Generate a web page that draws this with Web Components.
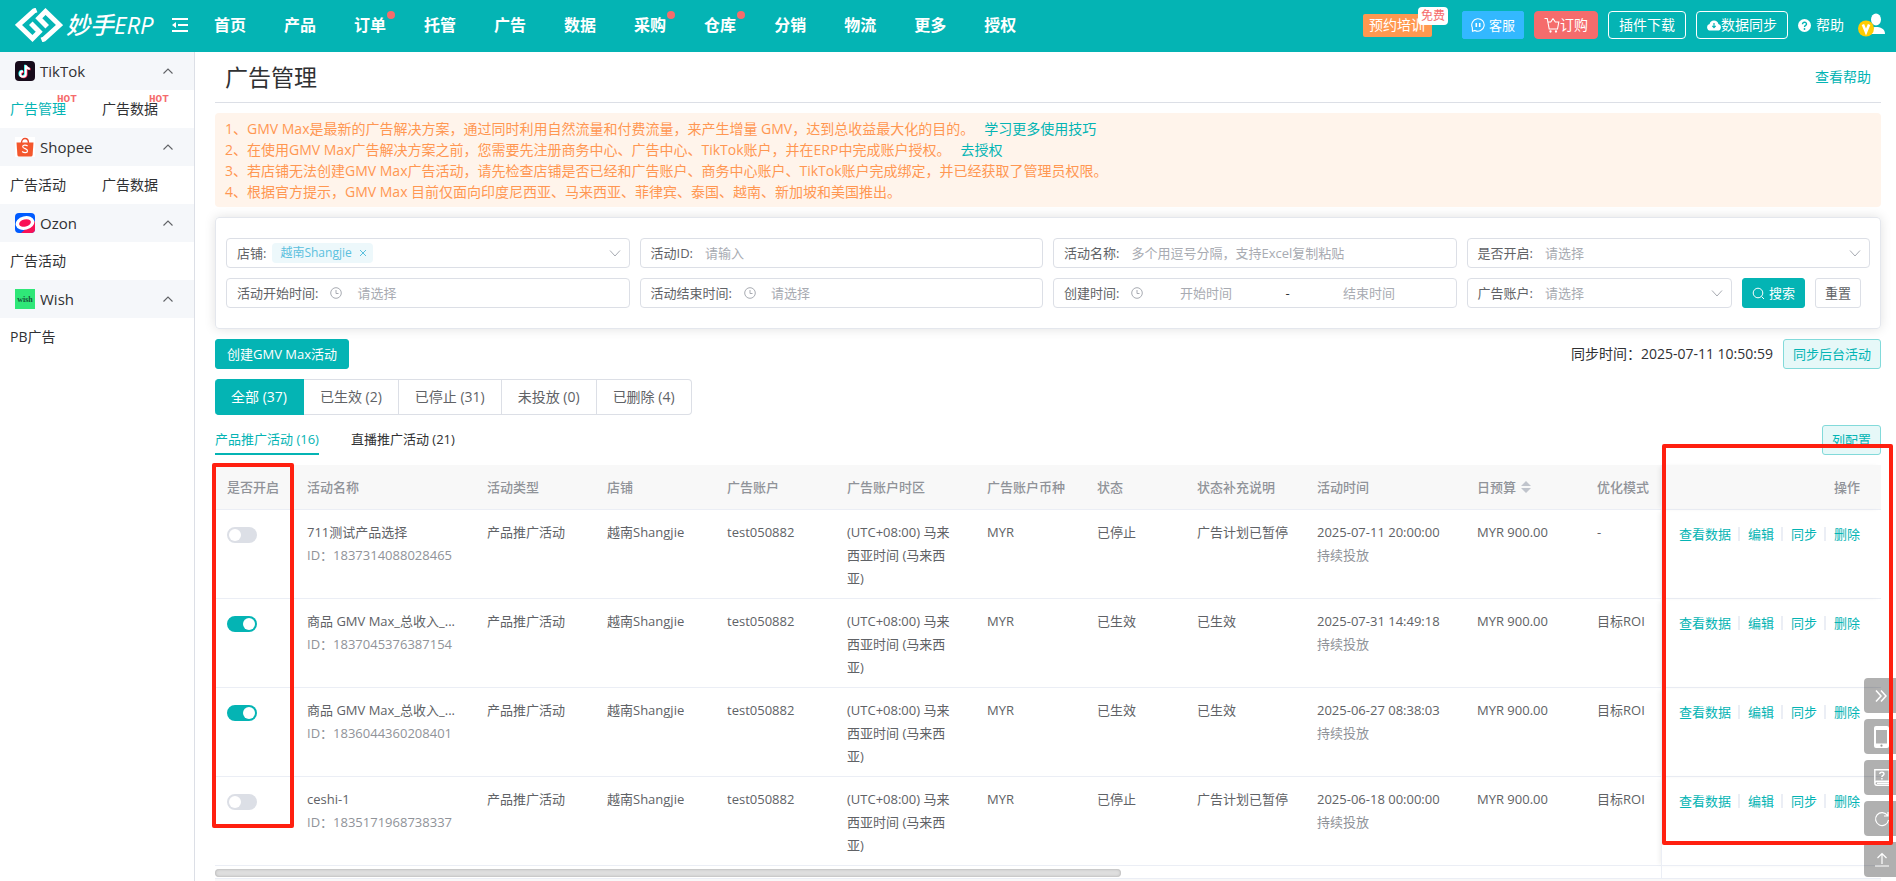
<!DOCTYPE html>
<html lang="zh-CN">
<head>
<meta charset="utf-8">
<title>广告管理</title>
<style>
  html, body { height: 100%; margin: 0; }
  body {
    font: 13px/20px "Open Sans", "Noto Sans CJK SC", sans-serif;
    color: #303133;
    background: #fff;
    overflow: hidden;
    --brand: #04b4b4;
    --line: #dcdfe6;
    --soft: #ebeef5;
    --text: #606266;
    --mute: #909399;
    --hint: #a8abb2;
  }
</style>
</head>
<body>
<erp-app></erp-app>
<script>
const define = (name, html) => customElements.define(name, class extends HTMLElement {
  constructor() {
    super();
    this.attachShadow({ mode: 'open' });
  }
  connectedCallback() {
    if (this.ready) return;
    this.ready = true;
    const t = document.createElement('template');
    t.innerHTML = typeof html === 'function' ? html(this) : html;
    this.shadowRoot.append(t.content.cloneNode(true));
  }
});

const RESET = `*, *::before, *::after { box-sizing: border-box; }
  button, input, select { font: inherit; margin: 0; }
  a { color: inherit; text-decoration: none; }
  svg { display: block; flex: none; }`;

/* ---------- top bar ---------- */
define('erp-nav-item', el => `
<style>${RESET}
  :host { display: block; position: relative; }
  a { display: block; font-size: 16px; line-height: 24px; font-weight: 700; white-space: nowrap; }
  i { position: absolute; right: -9px; top: -2px; width: 8px; height: 8px; border-radius: 50%; background: #f56c6c; }
</style>
<a href="#"><slot></slot></a>${el.hasAttribute('dot') ? '<i></i>' : ''}`);

define('erp-header', `
<style>${RESET}
  :host { display: flex; align-items: center; height: 52px; padding: 0 10px 2px 15px; background: var(--brand); color: #fff; }
  .logo { display: flex; align-items: center; gap: 3px; font-size: 24px; line-height: 34px; font-style: italic; font-weight: 500; white-space: nowrap; width: 141px; }
  .menu { border: 0; background: none; padding: 0; margin: 0 26px 0 16px; color: inherit; }
  nav { display: flex; gap: 38px; flex: 1; }
  .tools { display: flex; align-items: center; gap: 10px; white-space: nowrap; font-size: 14px; }
  .book { position: relative; display: block; height: 23px; width: 69px; padding: 0 6px; background: #ff9850; border-radius: 2px; line-height: 22px; margin: 0 20px 0 0; }
  .book b { position: absolute; left: 55px; top: -7px; width: 30px; height: 18px; border-radius: 4px; background: #fff; color: #f56c6c; font-size: 12px; line-height: 18px; font-weight: 400; text-align: center; }
  button { cursor: pointer; }
  .btn { display: flex; align-items: center; justify-content: center; height: 28px; border: 1px solid #fff; border-radius: 4px; background: none; color: #fff; padding: 0 10px; line-height: 20px; }
  .cs { background: #33b8ff; border-color: #33b8ff; gap: 4px; font-size: 13px; padding: 0 8px; border-radius: 2px; }
  .buy { background: #f56c6c; border-color: #f56c6c; padding: 0 9px; }
  .help { display: flex; align-items: center; gap: 5px; }
  .avatar { margin-left: 4px; }
</style>
<a class="logo" href="#">
  <svg width="48" height="34" viewBox="0 0 48 34" fill="none" stroke="#fff" stroke-width="5">
    <path d="M21.500 2 19 3 3.500 17 17.500 30.500 24.200 23.800 15.800 15.200"/>
    <path d="M26.500 32 29 31 44.500 17 30.500 3.500 23.800 10.200 32.200 18.800"/>
  </svg>妙手ERP</a>
<button class="menu" aria-label="收起菜单"><svg width="16" height="14" viewBox="0 0 16 14" fill="#fff"><path d="M0 0h16v2H0zM6 6h10v2H6zM0 12h16v2H0zM0 7l4-3v6z"/></svg></button>
<nav>
  <erp-nav-item>首页</erp-nav-item><erp-nav-item>产品</erp-nav-item><erp-nav-item dot>订单</erp-nav-item>
  <erp-nav-item>托管</erp-nav-item><erp-nav-item>广告</erp-nav-item><erp-nav-item>数据</erp-nav-item>
  <erp-nav-item dot>采购</erp-nav-item><erp-nav-item dot>仓库</erp-nav-item><erp-nav-item>分销</erp-nav-item>
  <erp-nav-item>物流</erp-nav-item><erp-nav-item>更多</erp-nav-item><erp-nav-item>授权</erp-nav-item>
</nav>
<div class="tools">
  <a class="book" href="#">预约培训<b>免费</b></a>
  <button class="btn cs"><svg width="14" height="14" viewBox="0 0 14 14" fill="none" stroke="#fff" stroke-width="1.100"><path d="M1.500 13.200 1.300 9.500A6.200 6.200 0 1 1 4 12.400z"/><path d="M5.300 5v4M8.700 5v4" stroke-width="1.600"/></svg>客服</button>
  <button class="btn buy"><svg width="16" height="16" viewBox="0 0 16 16" fill="none" stroke="#fff" stroke-width="1.100"><path d="M.5 1.500h2.700l2 10.500h8.300l1.300-7H11M4 5h3M9 1.500 6.800 5M9 1.500 11.300 5"/><circle cx="6.500" cy="14.500" r=".6"/><circle cx="12" cy="14.500" r=".6"/></svg>订购</button>
  <button class="btn">插件下载</button>
  <button class="btn"><svg width="14" height="12" viewBox="0 0 14 12"><path fill="#fff" d="M3.500 11.500A3.300 3.300 0 0 1 2.600 5a4.500 4.500 0 0 1 8.800 0 3.300 3.300 0 0 1-.9 6.500z"/><path d="M7 4v4M5.300 6.800 7 8.600l1.700-1.800" stroke="#04b4b4" stroke-width="1.200" fill="none"/></svg>数据同步</button>
  <a class="help" href="#"><svg width="13" height="13" viewBox="0 0 13 13"><circle cx="6.500" cy="6.500" r="6.500" fill="#fff"/><path d="M4.500 5.200c0-2.700 4.200-2.400 4 0C8.400 6.500 6.500 6.400 6.500 8" fill="none" stroke="#04b4b4" stroke-width="1.400"/><circle cx="6.500" cy="10" r=".9" fill="#04b4b4"/></svg>帮助</a>
  <a class="avatar" href="#" aria-label="账户"><svg width="28" height="24" viewBox="0 0 28 24"><ellipse cx="18" cy="6.500" rx="5" ry="6" fill="#fff"/><path fill="#fff" d="M12 21c0-5 2-7 6-7s9 1.500 9 7z"/><circle cx="8" cy="15.500" r="8" fill="#fc0"/><path d="M4.900 11.500 8 19l3.100-7.500" fill="none" stroke="#fff" stroke-width="2.600"/></svg></a>
</div>`);

/* ---------- side bar ---------- */
define('erp-side-group', el => `
<style>${RESET}
  :host { display: block; }
  button { display: flex; align-items: center; width: 100%; height: 38px; padding: 0 20px 0 15px; border: 0; background: #f5f7fa; color: #303133; font-size: 15px; line-height: 20px; text-align: left; }
  button span { flex: 1; padding-left: 5px; }
  .items { display: grid; grid-template-columns: 92px 1fr; padding: 0 10px; line-height: 38px; font-size: 14px; }
</style>
<button aria-expanded="true"><slot name="icon"></slot><span>${el.getAttribute('name')}</span>
<svg width="12" height="12" viewBox="0 0 12 12" fill="none" stroke="#606266" stroke-width="1.100"><path d="M1.500 8.500 6 4l4.500 4.500"/></svg></button>
<div class="items"><slot></slot></div>`);

define('erp-side-link', el => `
<style>${RESET}
  :host { display: block; }
  a { position: relative; display: inline-block; color: ${el.hasAttribute('active') ? 'var(--brand)' : '#303133'}; }
  sup { position: absolute; left: 47px; top: 3px; font: 700 11px/12px "Liberation Mono", monospace; color: #f56c6c; }
</style>
<a href="#"><slot></slot>${el.hasAttribute('hot') ? '<sup>HOT</sup>' : ''}</a>`);

define('erp-sidebar', `
<style>${RESET} :host { display: block; width: 195px; flex: none; border-right: 1px solid #dcdfe6; background: #fff; }</style>
<erp-side-group name="TikTok">
  <svg slot="icon" width="20" height="20" viewBox="0 0 20 20"><rect width="20" height="20" rx="4" fill="#170b1a"/><g fill="none" stroke-width="2"><path stroke="#25f4ee" d="M10 3.800v8.700a2.800 2.800 0 1 1-2.800-2.800M10 4c.5 2 1.800 3.200 4 3.300"/><path stroke="#fe2c55" d="M11.600 4.800v8.700a2.800 2.800 0 1 1-2.800-2.800M11.600 5c.5 2 1.800 3.200 4 3.300"/><path stroke="#fff" d="M10.800 4.200v8.800a2.800 2.800 0 1 1-2.800-2.800M10.800 4.500c.5 2 1.800 3.200 4 3.300"/></g></svg>
  <erp-side-link active hot>广告管理</erp-side-link><erp-side-link hot>广告数据</erp-side-link>
</erp-side-group>
<erp-side-group name="Shopee">
  <svg slot="icon" width="20" height="20" viewBox="0 0 20 20"><rect width="20" height="20" fill="#fff"/><path d="M6.500 6c0-6 7-6 7 0" fill="none" stroke="#ee4d2d" stroke-width="1.400"/><path fill="#f4572d" d="M1.500 5.500h17l-.9 12.500q-.2 1.500-1.600 1.500H4q-1.400 0-1.600-1.500z"/><path d="M12.600 9c-1.800-1.500-5-1.100-4.900.8.200 2.200 4.900 1.600 4.800 4.100-.1 2.200-3.500 2.100-5.400.6" fill="none" stroke="#fff" stroke-width="1.200"/></svg>
  <erp-side-link>广告活动</erp-side-link><erp-side-link>广告数据</erp-side-link>
</erp-side-group>
<erp-side-group name="Ozon">
  <svg slot="icon" width="20" height="20" viewBox="0 0 20 20"><defs><clipPath id="r"><rect width="20" height="20" rx="4"/></clipPath></defs><g clip-path="url(#r)"><path fill="#005bff" d="M0 0h20v20H0z"/><path fill="#f91155" d="M20 8v12H6z"/><ellipse cx="10" cy="10" rx="9.500" ry="6.800" transform="rotate(-14 10 10)" fill="#fff"/><ellipse cx="10" cy="10" rx="6" ry="3.600" transform="rotate(-14 10 10)" fill="#f91155"/></g></svg>
  <erp-side-link>广告活动</erp-side-link>
</erp-side-group>
<erp-side-group name="Wish">
  <svg slot="icon" width="20" height="20" viewBox="0 0 20 20"><path fill="#2fe778" d="M0 0h20v20H0z"/><text x="10" y="13" font-family="Liberation Serif, serif" font-weight="700" font-size="8" text-anchor="middle" fill="#15543a">wish</text></svg>
  <erp-side-link>PB广告</erp-side-link>
</erp-side-group>`);

/* ---------- form fields ---------- */
const CLOCK = '<svg width="12" height="12" viewBox="0 0 12 12" fill="none" stroke="#a8abb2"><circle cx="6" cy="6" r="5.300"/><path d="M6 3v3.500h2.500"/></svg>';
const DOWN = '<svg width="12" height="12" viewBox="0 0 12 12" fill="none" stroke="#a8abb2"><path d="M1 3.500 6 9l5-5.500"/></svg>';
define('erp-field', el => {
  const kind = el.getAttribute('kind'), hint = el.getAttribute('hint') || '', label = el.getAttribute('label');
  const body = {
    text: `<input id="f" placeholder="${hint}">`,
    select: `<select id="f"><option>${hint}</option></select>${DOWN}`,
    date: `${CLOCK}<input id="f" class="date" placeholder="${hint}">`,
    range: `${CLOCK}<input id="f" class="mid" placeholder="开始时间"><span class="dash">-</span><input class="mid" aria-label="结束时间" placeholder="结束时间"><span class="end"></span>`,
    tags: `<span class="tag">越南Shangjie<button id="f" aria-label="移除"><svg width="8" height="8" viewBox="0 0 8 8" stroke="#5bc0de"><path d="M1 1l6 6M7 1 1 7"/></svg></button></span><span class="grow"></span>${DOWN}`
  }[kind];
  return `<style>${RESET}
  :host { display: flex; align-items: center; height: 30px; min-width: 0; padding: 0 8px 0 10px; border: 1px solid var(--line); border-radius: 4px; background: #fff; color: var(--text); }
  label { white-space: nowrap; margin-right: ${kind === 'tags' ? 6 : 12}px; }
  input, select { flex: 1; min-width: 0; width: 0; height: 26px; border: 0; padding: 0; outline: 0; background: none; color: var(--hint); appearance: none; }
  input::placeholder { color: var(--hint); opacity: 1; }
  .date { margin-left: 15px; }
  .mid { text-align: center; }
  .dash { flex: none; color: #303133; padding: 0 17px; }
  .end { width: 16px; }
  .grow { flex: 1; }
  .tag { display: flex; align-items: center; gap: 7px; height: 20px; padding: 0 6px 0 8px; border-radius: 4px; background: #edf8fb; color: #5bc0de; font-size: 12px; }
  .tag button { border: 0; background: none; padding: 0; }
</style><label for="f">${label}</label>${body}`;
});

define('erp-button', `
<style>${RESET}
  :host { display: block; flex: none; }
  button { display: flex; align-items: center; justify-content: center; gap: 4px; height: 30px; padding: 0 9px; border: 1px solid var(--line); border-radius: 3px; background: #fff; color: var(--text); line-height: 20px; white-space: nowrap; }
  :host([wide]) button { padding: 0 11px; }
  :host([kind=primary]) button { background: var(--brand); border-color: var(--brand); color: #fff; }
  :host([kind=plain]) button { background: #e6f8f8; border-color: #82dada; color: var(--brand); }
</style><button><slot></slot></button>`);

define('erp-filters', `
<style>${RESET}
  :host { display: grid; grid-template-columns: repeat(4, minmax(0, 1fr)); gap: 10px; padding: 20px 10px; border: 1px solid #e4e7ed; border-radius: 4px; box-shadow: 0 0 12px rgba(0,0,0,.12); }
  .last { display: flex; gap: 10px; padding-right: 9px; }
  .last erp-field { flex: 1; }
</style>
<erp-field kind="tags" label="店铺:"></erp-field>
<erp-field kind="text" label="活动ID:" hint="请输入"></erp-field>
<erp-field kind="text" label="活动名称:" hint="多个用逗号分隔，支持Excel复制粘贴"></erp-field>
<erp-field kind="select" label="是否开启:" hint="请选择"></erp-field>
<erp-field kind="date" label="活动开始时间:" hint="请选择"></erp-field>
<erp-field kind="date" label="活动结束时间:" hint="请选择"></erp-field>
<erp-field kind="range" label="创建时间:"></erp-field>
<div class="last"><erp-field kind="select" label="广告账户:" hint="请选择"></erp-field>
  <erp-button kind="primary"><svg width="13" height="13" viewBox="0 0 13 13" fill="none" stroke="#fff"><circle cx="6" cy="6" r="4.800"/><path d="m9.500 9.500 2.500 2.500"/></svg>搜索</erp-button>
  <erp-button>重置</erp-button></div>`);

/* ---------- table ---------- */
define('erp-switch', el => `
<style>${RESET}
  :host { display: block; height: 16px; }
  input { appearance: none; display: flex; align-items: center; width: 30px; height: 16px; margin: 0; padding: 0 2px; border-radius: 8px; background: #dcdfe6; }
  input::before { content: ""; width: 12px; height: 12px; border-radius: 50%; background: #fff; }
  input:checked { background: var(--brand); justify-content: flex-end; }
</style><input type="checkbox" role="switch" aria-label="是否开启" ${el.hasAttribute('on') ? 'checked' : ''}>`);

const ROWS = [
  [0, '711测试产品选择', '1837314088028465', '已停止', '广告计划已暂停', '2025-07-11 20:00:00', '-'],
  [1, '商品 GMV Max_总收入_...', '1837045376387154', '已生效', '已生效', '2025-07-31 14:49:18', '目标ROI'],
  [1, '商品 GMV Max_总收入_...', '1836044360208401', '已生效', '已生效', '2025-06-27 08:38:03', '目标ROI'],
  [0, 'ceshi-1', '1835171968738337', '已停止', '广告计划已暂停', '2025-06-18 00:00:00', '目标ROI']
];
define('erp-table', () => `
<style>${RESET}
  :host { display: block; }
  table { width: 100%; table-layout: fixed; border-collapse: separate; border-spacing: 0; color: var(--text); line-height: 23px; }
  th { height: 45px; padding: 0 0 0 12px; background: #f8f8f8; color: var(--mute); text-align: left; font-weight: 500; border-bottom: 1px solid var(--soft); white-space: nowrap; }
  td { height: 89px; padding: 11px 0 8px 12px; vertical-align: top; border-bottom: 1px solid var(--soft); white-space: nowrap; }
  td:first-child { padding-top: 17px; }
  small { display: block; font-size: 13px; color: var(--mute); }
  .ops { padding: 13px 21px 0 0; text-align: right; border-left: 1px solid var(--soft); box-shadow: -3px 0 5px -2px rgba(0,0,0,.08); }
  th.ops { padding-top: 0; }
  .ops div { display: flex; justify-content: flex-end; align-items: center; color: var(--brand); }
  .ops a + a::before { content: ""; display: inline-block; width: 2px; height: 14px; margin: 0 8px 0 7px; background: var(--soft); vertical-align: -2px; }
  th span { display: flex; align-items: center; gap: 5px; }
  .track { display: flex; height: 12px; padding-top: 3px; }
  .track::after { content: ""; width: 220px; margin: -3px 0 0 auto; border-left: 1px solid var(--soft); }
  .bar { width: 906px; max-width: 80%; height: 8px; border-radius: 4px; background: #dedede; box-shadow: inset 0 0 3px rgba(0,0,0,.25); }
</style>
<table>
<colgroup><col style="width:80px"><col style="width:180px"><col style="width:120px"><col style="width:120px"><col style="width:120px"><col style="width:140px"><col style="width:110px"><col style="width:100px"><col style="width:120px"><col style="width:160px"><col style="width:120px"><col><col style="width:220px"></colgroup>
<thead><tr><th>是否开启</th><th>活动名称</th><th>活动类型</th><th>店铺</th><th>广告账户</th><th>广告账户时区</th><th>广告账户币种</th><th>状态</th><th>状态补充说明</th><th>活动时间</th>
<th><span>日预算<svg width="10" height="14" viewBox="0 0 10 14" fill="#c0c4cc"><path d="M5 1l5 5H0zM0 8h10l-5 5z"/></svg></span></th><th>优化模式</th><th class="ops">操作</th></tr></thead>
<tbody>${ROWS.map(r => `<tr><td><erp-switch ${r[0] ? 'on' : ''}></erp-switch></td><td>${r[1]}<small>ID：${r[2]}</small></td><td>产品推广活动</td><td>越南Shangjie</td><td>test050882</td>
<td>(UTC+08:00) 马来<br>西亚时间 (马来西<br>亚)</td><td>MYR</td><td>${r[3]}</td><td>${r[4]}</td><td>${r[5]}<small>持续投放</small></td><td>MYR 900.00</td><td>${r[6]}</td>
<td class="ops"><div><a href="#">查看数据</a><a href="#">编辑</a><a href="#">同步</a><a href="#">删除</a></div></td></tr>`).join('')}</tbody>
</table>
<div class="track"><div class="bar"></div></div>`);

/* ---------- main panel ---------- */
define('erp-main', `
<style>${RESET}
  :host { display: block; flex: 1; min-width: 0; padding: 0 15px 0 20px; }
  .title { display: flex; align-items: center; justify-content: space-between; height: 51px; padding: 0 10px; border-bottom: 1px solid var(--line); }
  h1 { margin: 0; font-size: 23px; line-height: 32px; font-weight: 400; }
  .title a { font-size: 14px; color: var(--brand); }
  .note { margin: 10px 0; padding: 5px 10px; border-radius: 4px; background: #fff4eb; color: #ff9752; font-size: 14px; line-height: 21px; }
  .note p { margin: 0; white-space: nowrap; }
  .note a { color: var(--brand); margin-left: 10px; }
  .bar { display: flex; align-items: center; justify-content: space-between; margin: 10px 0; }
  .sync { display: flex; align-items: center; gap: 10px; font-size: 14px; }
  .sync erp-button { font-size: 13px; }
  .seg { display: flex; height: 36px; }
  .seg button { border: 1px solid var(--line); border-left: 0; background: #fff; color: var(--text); font-size: 14px; padding: 0 16px; }
  .seg button:first-child { background: var(--brand); border-color: var(--brand); color: #fff; border-radius: 4px 0 0 4px; }
  .seg button:last-child { border-radius: 0 4px 4px 0; }
  .tabs { display: flex; align-items: center; gap: 32px; height: 30px; margin: 10px 0; }
  .tabs a { line-height: 28px; border-bottom: 2px solid transparent; }
  .tabs .on { color: var(--brand); border-color: var(--brand); }
  .tabs erp-button { margin-left: auto; }
  .foot { height: 12px; background: #f8f8f8; border-top: 1px solid var(--soft); }
</style>
<div class="title"><h1>广告管理</h1><a href="#">查看帮助</a></div>
<div class="note">
  <p>1、GMV Max是最新的广告解决方案，通过同时利用自然流量和付费流量，来产生增量 GMV，达到总收益最大化的目的。<a href="#">学习更多使用技巧</a></p>
  <p>2、在使用GMV Max广告解决方案之前，您需要先注册商务中心、广告中心、TikTok账户，并在ERP中完成账户授权。<a href="#">去授权</a></p>
  <p>3、若店铺无法创建GMV Max广告活动，请先检查店铺是否已经和广告账户、商务中心账户、TikTok账户完成绑定，并已经获取了管理员权限。</p>
  <p>4、根据官方提示，GMV Max 目前仅面向印度尼西亚、马来西亚、菲律宾、泰国、越南、新加坡和美国推出。</p>
</div>
<erp-filters></erp-filters>
<div class="bar"><erp-button kind="primary" wide>创建GMV Max活动</erp-button>
  <div class="sync"><span>同步时间：2025-07-11 10:50:59</span><erp-button kind="plain">同步后台活动</erp-button></div></div>
<div class="seg"><button>全部 (37)</button><button>已生效 (2)</button><button>已停止 (31)</button><button>未投放 (0)</button><button>已删除 (4)</button></div>
<div class="tabs"><a class="on" href="#">产品推广活动 (16)</a><a href="#">直播推广活动 (21)</a><erp-button kind="plain">列配置</erp-button></div>
<erp-table></erp-table>
<div class="foot"></div>`);

/* ---------- overlays ---------- */
define('erp-float-tools', `
<style>${RESET}
  :host { position: fixed; right: 0; bottom: 4px; display: grid; gap: 6px; }
  button { display: flex; align-items: center; width: 32px; height: 35px; padding: 0 0 0 10px; border: 0; border-radius: 4px 0 0 4px; background: rgba(0,0,0,.31); overflow: hidden; }
</style>
<button aria-label="收起"><svg width="14" height="14" viewBox="0 0 14 14" fill="none" stroke="#fff" stroke-width="1.500"><path d="m2 1.500 5 5.500-5 5.500M7 1.500 12 7l-5 5.500"/></svg></button>
<button aria-label="手机版"><svg width="15" height="22" viewBox="0 0 15 22"><path fill="#fff" fill-rule="evenodd" d="M2 0h11q2 0 2 2v18q0 2-2 2H2q-2 0-2-2V2q0-2 2-2zM2 4v13.500h11V4z"/><circle cx="7.500" cy="19.700" r="1.100" fill="#999"/></svg></button>
<button aria-label="帮助手册"><svg width="16" height="17" viewBox="0 0 16 17" fill="none" stroke="#fff" stroke-width="1.400"><path d="M15.300 12.300H3Q.8 12.500.8 14.300T3 16.200h12.300M.8 14.300V.8h14.500v11.500M3 14.300h12"/><path d="M5.800 5c0-2.600 4.400-2.400 4.200 0C9.900 6.400 7.900 6.400 7.900 8M7.900 9v1.400"/></svg></button>
<button aria-label="刷新"><svg width="16" height="16" viewBox="0 0 16 16" fill="none" stroke="#fff" stroke-width="1.200"><path d="M13.500 4.500A6.500 6.500 0 1 0 14.500 9M14 1v4h-4"/></svg></button>
<button aria-label="回到顶部"><svg width="16" height="15" viewBox="0 0 16 15" fill="none" stroke="#fff" stroke-width="1.200"><path d="M1 14h14M8 12V1.500M3.500 6 8 1.500 12.500 6"/></svg></button>`);

define('erp-marker', `<style>:host { position: absolute; box-sizing: border-box; border: 4px solid #ff2010; border-radius: 2px; pointer-events: none; }</style>`);

define('erp-app', `
<style>${RESET}
  :host { display: flex; flex-direction: column; position: relative; height: 100%; overflow: hidden; }
  main { display: flex; flex: 1; min-height: 0; }
  .left { left: 212px; top: 463px; width: 82px; height: 365px; }
  .right { right: 3px; top: 444px; width: 231px; height: 401px; }
</style>
<erp-header></erp-header>
<main><erp-sidebar></erp-sidebar><erp-main></erp-main></main>
<erp-float-tools></erp-float-tools>
<erp-marker class="left"></erp-marker><erp-marker class="right"></erp-marker>`);
</script>
</body>
</html>
